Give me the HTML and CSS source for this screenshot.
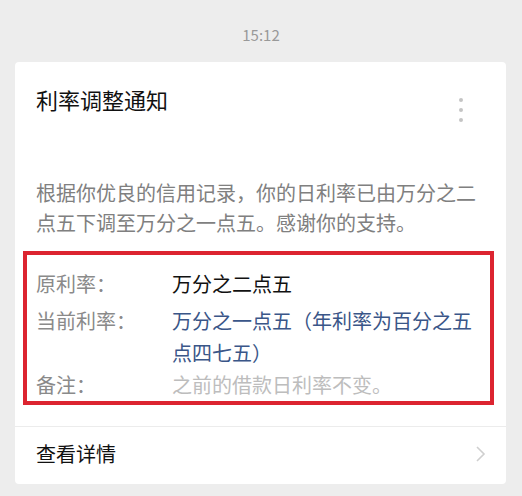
FILE: index.html
```html
<!DOCTYPE html>
<html lang="zh-CN">
<head>
  <meta charset="UTF-8">
  <meta name="viewport" content="width=device-width, initial-scale=1.0">
  <title>利率调整通知</title>
  <link rel="stylesheet" href="styles.css">
</head>
<body>
  <div class="time">15:12</div>

  <div class="card">
    <div class="card-head">
      <h2>利率调整通知</h2>
      <div class="more">
        <span></span><span></span><span></span>
      </div>
    </div>

    <p class="desc">根据你优良的信用记录，你的日利率已由万分之二点五下调至万分之一点五。感谢你的支持。</p>

    <!-- highlighted details -->
    <div class="details">
      <div class="row first">
        <div class="label">原利率：</div>
        <div class="value">万分之二点五</div>
      </div>
      <div class="row">
        <div class="label">当前利率：</div>
        <div class="value blue">万分之一点五（年利率为百分之五点四七五）</div>
      </div>
      <div class="row">
        <div class="label">备注：</div>
        <div class="value muted">之前的借款日利率不变。</div>
      </div>
    </div>

    <div class="card-foot">
      <span>查看详情</span>
      <svg class="arrow" width="12" height="16" viewBox="0 0 12 16">
        <polyline points="2,1 9,8 2,15" fill="none" stroke="#cfcfcf" stroke-width="1.6"/>
      </svg>
    </div>
  </div>
</body>
</html>
```

FILE: styles.css
```css
body {
  margin: 0;
  padding: 0;
  background-color: #ededed;
  font-family: "Noto Sans CJK SC", "Noto Sans", sans-serif;
  width: 522px;
  height: 496px;
  overflow: hidden;
}
.time {
  padding-top: 25px;
  height: 20px;
  line-height: 20px;
  font-size: 15px;
  color: #999;
  text-align: center;
}
.card {
  margin: 17px 16px 0 15px;
  background-color: #fff;
  border-radius: 4px;
}
.card-head {
  display: flex;
  justify-content: space-between;
  padding: 22px 0 0 21px;
}
.card-head h2 {
  margin: 0;
  font-size: 22px;
  line-height: 30px;
  font-weight: normal;
  color: #111;
}
.more {
  display: flex;
  flex-direction: column;
  gap: 6px;
  padding: 14px 43px 0 0;
}
.more span {
  width: 4px;
  height: 4px;
  border-radius: 50%;
  background-color: #c4c4c4;
}
.desc {
  margin: 56px 20px 0 21px;
  font-size: 20px;
  line-height: 30px;
  color: #808080;
}
.details {
  margin: 13px 12px 0 8px;
  border: 4px solid #dc2430;
  padding: 13px 0 0 9px;
}
.row {
  display: flex;
  font-size: 20px;
  line-height: 32px;
}
.row.first {
  margin-bottom: 5px;
}
.label {
  width: 136px;
  flex-shrink: 0;
  color: #8a8a8a;
}
.value {
  width: 310px;
  color: #111;
}
.value.blue {
  color: #3a5688;
}
.value.muted {
  color: #bdbdbd;
}
.card-foot {
  margin-top: 21px;
  border-top: 1px solid #ececec;
  height: 58px;
  box-sizing: border-box;
  padding: 0 19px 4px 21px;
  display: flex;
  align-items: center;
  justify-content: space-between;
  font-size: 20px;
  color: #111;
}
.arrow {
  display: block;
}
```
